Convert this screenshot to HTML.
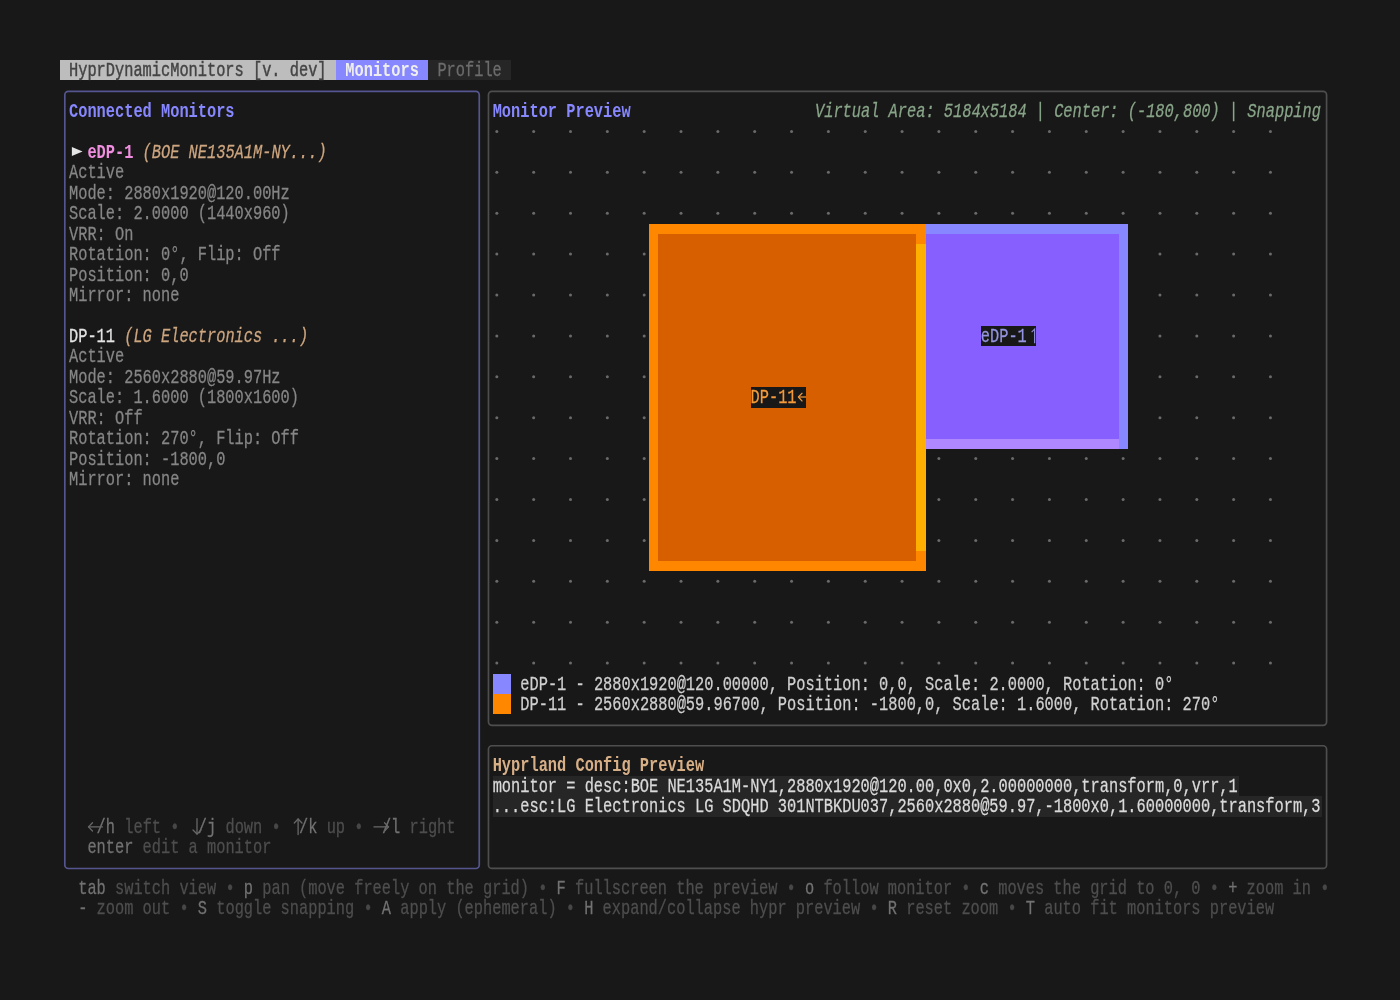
<!DOCTYPE html>
<html><head><meta charset="utf-8"><style>
html,body{margin:0;padding:0}
body{width:1400px;height:1000px;background:#181818;overflow:hidden;position:relative}
.b{position:absolute}
#tx{position:absolute;left:0;top:0;width:1400px;height:1000px;will-change:transform}
.bx{position:absolute;box-sizing:content-box}
.t{position:absolute;white-space:pre;font-family:"Liberation Mono",monospace;font-size:15.347px;line-height:20.45px;height:20.45px;transform:scaleY(1.27);transform-origin:0 7.3px;-webkit-text-stroke:0.2px currentColor}
.t span{-webkit-text-stroke:inherit}
</style></head><body>
<div id="tx"><div class="b" style="left:59.8px;top:60px;width:276.3px;height:20.45px;background:#bdbdbd;"></div>
<div class="b" style="left:336.1px;top:60px;width:92.1px;height:20.45px;background:#8787ff;"></div>
<div class="b" style="left:428.2px;top:60px;width:82.89px;height:20.45px;background:#262626;"></div>
<div class="t" style="left:69.01px;top:60px"><span style="color:#444444;-webkit-text-stroke:0.35px #444444">HyprDynamicMonitors [v. dev]</span></div>
<div class="t" style="left:345.31px;top:60px"><span style="color:#eeeeee;font-weight:bold;-webkit-text-stroke:0">Monitors</span></div>
<div class="t" style="left:437.41px;top:60px"><span style="color:#6c6c6c">Profile</span></div>
<div class="t" style="left:69.01px;top:100.9px"><span style="color:#8787ff;font-weight:bold;-webkit-text-stroke:0">Connected Monitors</span></div>
<div class="t" style="left:69.01px;top:141.8px">  <span style="color:#f08ee0;font-weight:bold;-webkit-text-stroke:0">eDP-1</span> <span style="color:#cda57f;font-style:italic">(BOE NE135A1M-NY...)</span></div>
<div class="t" style="left:69.01px;top:162.25px"><span style="color:#868686">Active</span></div>
<div class="t" style="left:69.01px;top:182.7px"><span style="color:#868686">Mode: 2880x1920@120.00Hz</span></div>
<div class="t" style="left:69.01px;top:203.15px"><span style="color:#868686">Scale: 2.0000 (1440x960)</span></div>
<div class="t" style="left:69.01px;top:223.6px"><span style="color:#868686">VRR: On</span></div>
<div class="t" style="left:69.01px;top:244.05px"><span style="color:#868686">Rotation: 0°, Flip: Off</span></div>
<div class="t" style="left:69.01px;top:264.5px"><span style="color:#868686">Position: 0,0</span></div>
<div class="t" style="left:69.01px;top:284.95px"><span style="color:#868686">Mirror: none</span></div>
<div class="t" style="left:69.01px;top:325.85px"><span style="color:#e4e4e4">DP-11</span> <span style="color:#cda57f;font-style:italic">(LG Electronics ...)</span></div>
<div class="t" style="left:69.01px;top:346.3px"><span style="color:#868686">Active</span></div>
<div class="t" style="left:69.01px;top:366.75px"><span style="color:#868686">Mode: 2560x2880@59.97Hz</span></div>
<div class="t" style="left:69.01px;top:387.2px"><span style="color:#868686">Scale: 1.6000 (1800x1600)</span></div>
<div class="t" style="left:69.01px;top:407.65px"><span style="color:#868686">VRR: Off</span></div>
<div class="t" style="left:69.01px;top:428.1px"><span style="color:#868686">Rotation: 270°, Flip: Off</span></div>
<div class="t" style="left:69.01px;top:448.55px"><span style="color:#868686">Position: -1800,0</span></div>
<div class="t" style="left:69.01px;top:469px"><span style="color:#868686">Mirror: none</span></div>
<div class="t" style="left:87.43px;top:816.65px"><span style="color:#727272"> /h</span><span style="color:#4e4e4e"> left</span><span style="color:#474747"> • </span><span style="color:#727272"> /j</span><span style="color:#4e4e4e"> down</span><span style="color:#474747"> • </span><span style="color:#727272"> /k</span><span style="color:#4e4e4e"> up</span><span style="color:#474747"> • </span><span style="color:#727272"> /l</span><span style="color:#4e4e4e"> right</span></div>
<div class="t" style="left:87.43px;top:837.1px"><span style="color:#727272">enter</span><span style="color:#4e4e4e"> edit a monitor</span></div>
<div class="t" style="left:492.67px;top:100.9px"><span style="color:#8787ff;font-weight:bold;-webkit-text-stroke:0">Monitor Preview</span></div>
<div class="t" style="left:815.02px;top:100.9px"><span style="color:#89a589;font-style:italic">Virtual Area: 5184x5184 | Center: (-180,800) | Snapping</span></div>
<div class="b" style="left:649.24px;top:223.6px;width:276.3px;height:347.65px;background:#ff8700;"></div>
<div class="b" style="left:658.45px;top:233.82px;width:257.88px;height:327.2px;background:#d75f00;"></div>
<div class="b" style="left:916.33px;top:244.05px;width:9.21px;height:306.75px;background:#ffaf00;"></div>
<div class="b" style="left:925.54px;top:223.6px;width:202.62px;height:224.95px;background:#8787ff;"></div>
<div class="b" style="left:925.54px;top:233.82px;width:193.41px;height:205.11px;background:#875fff;"></div>
<div class="b" style="left:925.54px;top:438.94px;width:193.41px;height:9.61px;background:#af87ff;"></div>
<div class="b" style="left:750.55px;top:387.2px;width:55.26px;height:20.45px;background:#181818;"></div>
<div class="t" style="left:750.55px;top:387.2px"><span style="color:#f59a3a">DP-11</span></div>
<div class="b" style="left:980.8px;top:325.85px;width:55.26px;height:20.45px;background:#181818;"></div>
<div class="t" style="left:980.8px;top:325.85px"><span style="color:#9494e0">eDP-1</span></div>
<div class="b" style="left:492.67px;top:673.5px;width:18.42px;height:20.45px;background:#8787ff;"></div>
<div class="b" style="left:492.67px;top:693.95px;width:18.42px;height:20.45px;background:#ff8700;"></div>
<div class="t" style="left:520.3px;top:673.5px"><span style="color:#d0d0d0">eDP-1 - 2880x1920@120.00000, Position: 0,0, Scale: 2.0000, Rotation: 0°</span></div>
<div class="t" style="left:520.3px;top:693.95px"><span style="color:#d0d0d0">DP-11 - 2560x2880@59.96700, Position: -1800,0, Scale: 1.6000, Rotation: 270°</span></div>
<div class="t" style="left:492.67px;top:755.3px"><span style="color:#d7af87;font-weight:bold;-webkit-text-stroke:0">Hyprland Config Preview</span></div>
<div class="b" style="left:492.67px;top:775.75px;width:746.01px;height:20.45px;background:#262626;"></div>
<div class="b" style="left:492.67px;top:796.2px;width:828.9px;height:20.45px;background:#262626;"></div>
<div class="t" style="left:492.67px;top:775.75px"><span style="color:#dadada">monitor = desc:BOE NE135A1M-NY1,2880x1920@120.00,0x0,2.00000000,transform,0,vrr,1</span></div>
<div class="t" style="left:492.67px;top:796.2px"><span style="color:#dadada">...esc:LG Electronics LG SDQHD 301NTBKDU037,2560x2880@59.97,-1800x0,1.60000000,transform,3</span></div>
<div class="t" style="left:78.22px;top:878px"><span style="color:#727272">tab</span><span style="color:#4e4e4e"> switch view</span><span style="color:#474747"> • </span><span style="color:#727272">p</span><span style="color:#4e4e4e"> pan (move freely on the grid)</span><span style="color:#474747"> • </span><span style="color:#727272">F</span><span style="color:#4e4e4e"> fullscreen the preview</span><span style="color:#474747"> • </span><span style="color:#727272">o</span><span style="color:#4e4e4e"> follow monitor</span><span style="color:#474747"> • </span><span style="color:#727272">c</span><span style="color:#4e4e4e"> moves the grid to 0, 0</span><span style="color:#474747"> • </span><span style="color:#727272">+</span><span style="color:#4e4e4e"> zoom in</span><span style="color:#474747"> •</span></div>
<div class="t" style="left:78.22px;top:898.45px"><span style="color:#727272">-</span><span style="color:#4e4e4e"> zoom out</span><span style="color:#474747"> • </span><span style="color:#727272">S</span><span style="color:#4e4e4e"> toggle snapping</span><span style="color:#474747"> • </span><span style="color:#727272">A</span><span style="color:#4e4e4e"> apply (ephemeral)</span><span style="color:#474747"> • </span><span style="color:#727272">H</span><span style="color:#4e4e4e"> expand/collapse hypr preview</span><span style="color:#474747"> • </span><span style="color:#727272">R</span><span style="color:#4e4e4e"> reset zoom</span><span style="color:#474747"> • </span><span style="color:#727272">T</span><span style="color:#4e4e4e"> auto fit monitors preview</span></div></div>
<svg width="1400" height="1000" style="position:absolute;left:0;top:0"><g fill="#6a6a6a"><circle cx="496.83" cy="131.42" r="1.5"/><circle cx="533.66" cy="131.42" r="1.5"/><circle cx="570.5" cy="131.42" r="1.5"/><circle cx="607.34" cy="131.42" r="1.5"/><circle cx="644.18" cy="131.42" r="1.5"/><circle cx="681.02" cy="131.42" r="1.5"/><circle cx="717.87" cy="131.42" r="1.5"/><circle cx="754.7" cy="131.42" r="1.5"/><circle cx="791.54" cy="131.42" r="1.5"/><circle cx="828.38" cy="131.42" r="1.5"/><circle cx="865.23" cy="131.42" r="1.5"/><circle cx="902.06" cy="131.42" r="1.5"/><circle cx="938.9" cy="131.42" r="1.5"/><circle cx="975.75" cy="131.42" r="1.5"/><circle cx="1012.59" cy="131.42" r="1.5"/><circle cx="1049.42" cy="131.42" r="1.5"/><circle cx="1086.27" cy="131.42" r="1.5"/><circle cx="1123.11" cy="131.42" r="1.5"/><circle cx="1159.94" cy="131.42" r="1.5"/><circle cx="1196.79" cy="131.42" r="1.5"/><circle cx="1233.62" cy="131.42" r="1.5"/><circle cx="1270.46" cy="131.42" r="1.5"/><circle cx="496.83" cy="172.32" r="1.5"/><circle cx="533.66" cy="172.32" r="1.5"/><circle cx="570.5" cy="172.32" r="1.5"/><circle cx="607.34" cy="172.32" r="1.5"/><circle cx="644.18" cy="172.32" r="1.5"/><circle cx="681.02" cy="172.32" r="1.5"/><circle cx="717.87" cy="172.32" r="1.5"/><circle cx="754.7" cy="172.32" r="1.5"/><circle cx="791.54" cy="172.32" r="1.5"/><circle cx="828.38" cy="172.32" r="1.5"/><circle cx="865.23" cy="172.32" r="1.5"/><circle cx="902.06" cy="172.32" r="1.5"/><circle cx="938.9" cy="172.32" r="1.5"/><circle cx="975.75" cy="172.32" r="1.5"/><circle cx="1012.59" cy="172.32" r="1.5"/><circle cx="1049.42" cy="172.32" r="1.5"/><circle cx="1086.27" cy="172.32" r="1.5"/><circle cx="1123.11" cy="172.32" r="1.5"/><circle cx="1159.94" cy="172.32" r="1.5"/><circle cx="1196.79" cy="172.32" r="1.5"/><circle cx="1233.62" cy="172.32" r="1.5"/><circle cx="1270.46" cy="172.32" r="1.5"/><circle cx="496.83" cy="213.22" r="1.5"/><circle cx="533.66" cy="213.22" r="1.5"/><circle cx="570.5" cy="213.22" r="1.5"/><circle cx="607.34" cy="213.22" r="1.5"/><circle cx="644.18" cy="213.22" r="1.5"/><circle cx="681.02" cy="213.22" r="1.5"/><circle cx="717.87" cy="213.22" r="1.5"/><circle cx="754.7" cy="213.22" r="1.5"/><circle cx="791.54" cy="213.22" r="1.5"/><circle cx="828.38" cy="213.22" r="1.5"/><circle cx="865.23" cy="213.22" r="1.5"/><circle cx="902.06" cy="213.22" r="1.5"/><circle cx="938.9" cy="213.22" r="1.5"/><circle cx="975.75" cy="213.22" r="1.5"/><circle cx="1012.59" cy="213.22" r="1.5"/><circle cx="1049.42" cy="213.22" r="1.5"/><circle cx="1086.27" cy="213.22" r="1.5"/><circle cx="1123.11" cy="213.22" r="1.5"/><circle cx="1159.94" cy="213.22" r="1.5"/><circle cx="1196.79" cy="213.22" r="1.5"/><circle cx="1233.62" cy="213.22" r="1.5"/><circle cx="1270.46" cy="213.22" r="1.5"/><circle cx="496.83" cy="254.12" r="1.5"/><circle cx="533.66" cy="254.12" r="1.5"/><circle cx="570.5" cy="254.12" r="1.5"/><circle cx="607.34" cy="254.12" r="1.5"/><circle cx="644.18" cy="254.12" r="1.5"/><circle cx="1159.94" cy="254.12" r="1.5"/><circle cx="1196.79" cy="254.12" r="1.5"/><circle cx="1233.62" cy="254.12" r="1.5"/><circle cx="1270.46" cy="254.12" r="1.5"/><circle cx="496.83" cy="295.02" r="1.5"/><circle cx="533.66" cy="295.02" r="1.5"/><circle cx="570.5" cy="295.02" r="1.5"/><circle cx="607.34" cy="295.02" r="1.5"/><circle cx="644.18" cy="295.02" r="1.5"/><circle cx="1159.94" cy="295.02" r="1.5"/><circle cx="1196.79" cy="295.02" r="1.5"/><circle cx="1233.62" cy="295.02" r="1.5"/><circle cx="1270.46" cy="295.02" r="1.5"/><circle cx="496.83" cy="335.93" r="1.5"/><circle cx="533.66" cy="335.93" r="1.5"/><circle cx="570.5" cy="335.93" r="1.5"/><circle cx="607.34" cy="335.93" r="1.5"/><circle cx="644.18" cy="335.93" r="1.5"/><circle cx="1159.94" cy="335.93" r="1.5"/><circle cx="1196.79" cy="335.93" r="1.5"/><circle cx="1233.62" cy="335.93" r="1.5"/><circle cx="1270.46" cy="335.93" r="1.5"/><circle cx="496.83" cy="376.82" r="1.5"/><circle cx="533.66" cy="376.82" r="1.5"/><circle cx="570.5" cy="376.82" r="1.5"/><circle cx="607.34" cy="376.82" r="1.5"/><circle cx="644.18" cy="376.82" r="1.5"/><circle cx="1159.94" cy="376.82" r="1.5"/><circle cx="1196.79" cy="376.82" r="1.5"/><circle cx="1233.62" cy="376.82" r="1.5"/><circle cx="1270.46" cy="376.82" r="1.5"/><circle cx="496.83" cy="417.73" r="1.5"/><circle cx="533.66" cy="417.73" r="1.5"/><circle cx="570.5" cy="417.73" r="1.5"/><circle cx="607.34" cy="417.73" r="1.5"/><circle cx="644.18" cy="417.73" r="1.5"/><circle cx="1159.94" cy="417.73" r="1.5"/><circle cx="1196.79" cy="417.73" r="1.5"/><circle cx="1233.62" cy="417.73" r="1.5"/><circle cx="1270.46" cy="417.73" r="1.5"/><circle cx="496.83" cy="458.62" r="1.5"/><circle cx="533.66" cy="458.62" r="1.5"/><circle cx="570.5" cy="458.62" r="1.5"/><circle cx="607.34" cy="458.62" r="1.5"/><circle cx="644.18" cy="458.62" r="1.5"/><circle cx="938.9" cy="458.62" r="1.5"/><circle cx="975.75" cy="458.62" r="1.5"/><circle cx="1012.59" cy="458.62" r="1.5"/><circle cx="1049.42" cy="458.62" r="1.5"/><circle cx="1086.27" cy="458.62" r="1.5"/><circle cx="1123.11" cy="458.62" r="1.5"/><circle cx="1159.94" cy="458.62" r="1.5"/><circle cx="1196.79" cy="458.62" r="1.5"/><circle cx="1233.62" cy="458.62" r="1.5"/><circle cx="1270.46" cy="458.62" r="1.5"/><circle cx="496.83" cy="499.53" r="1.5"/><circle cx="533.66" cy="499.53" r="1.5"/><circle cx="570.5" cy="499.53" r="1.5"/><circle cx="607.34" cy="499.53" r="1.5"/><circle cx="644.18" cy="499.53" r="1.5"/><circle cx="938.9" cy="499.53" r="1.5"/><circle cx="975.75" cy="499.53" r="1.5"/><circle cx="1012.59" cy="499.53" r="1.5"/><circle cx="1049.42" cy="499.53" r="1.5"/><circle cx="1086.27" cy="499.53" r="1.5"/><circle cx="1123.11" cy="499.53" r="1.5"/><circle cx="1159.94" cy="499.53" r="1.5"/><circle cx="1196.79" cy="499.53" r="1.5"/><circle cx="1233.62" cy="499.53" r="1.5"/><circle cx="1270.46" cy="499.53" r="1.5"/><circle cx="496.83" cy="540.43" r="1.5"/><circle cx="533.66" cy="540.43" r="1.5"/><circle cx="570.5" cy="540.43" r="1.5"/><circle cx="607.34" cy="540.43" r="1.5"/><circle cx="644.18" cy="540.43" r="1.5"/><circle cx="938.9" cy="540.43" r="1.5"/><circle cx="975.75" cy="540.43" r="1.5"/><circle cx="1012.59" cy="540.43" r="1.5"/><circle cx="1049.42" cy="540.43" r="1.5"/><circle cx="1086.27" cy="540.43" r="1.5"/><circle cx="1123.11" cy="540.43" r="1.5"/><circle cx="1159.94" cy="540.43" r="1.5"/><circle cx="1196.79" cy="540.43" r="1.5"/><circle cx="1233.62" cy="540.43" r="1.5"/><circle cx="1270.46" cy="540.43" r="1.5"/><circle cx="496.83" cy="581.33" r="1.5"/><circle cx="533.66" cy="581.33" r="1.5"/><circle cx="570.5" cy="581.33" r="1.5"/><circle cx="607.34" cy="581.33" r="1.5"/><circle cx="644.18" cy="581.33" r="1.5"/><circle cx="681.02" cy="581.33" r="1.5"/><circle cx="717.87" cy="581.33" r="1.5"/><circle cx="754.7" cy="581.33" r="1.5"/><circle cx="791.54" cy="581.33" r="1.5"/><circle cx="828.38" cy="581.33" r="1.5"/><circle cx="865.23" cy="581.33" r="1.5"/><circle cx="902.06" cy="581.33" r="1.5"/><circle cx="938.9" cy="581.33" r="1.5"/><circle cx="975.75" cy="581.33" r="1.5"/><circle cx="1012.59" cy="581.33" r="1.5"/><circle cx="1049.42" cy="581.33" r="1.5"/><circle cx="1086.27" cy="581.33" r="1.5"/><circle cx="1123.11" cy="581.33" r="1.5"/><circle cx="1159.94" cy="581.33" r="1.5"/><circle cx="1196.79" cy="581.33" r="1.5"/><circle cx="1233.62" cy="581.33" r="1.5"/><circle cx="1270.46" cy="581.33" r="1.5"/><circle cx="496.83" cy="622.23" r="1.5"/><circle cx="533.66" cy="622.23" r="1.5"/><circle cx="570.5" cy="622.23" r="1.5"/><circle cx="607.34" cy="622.23" r="1.5"/><circle cx="644.18" cy="622.23" r="1.5"/><circle cx="681.02" cy="622.23" r="1.5"/><circle cx="717.87" cy="622.23" r="1.5"/><circle cx="754.7" cy="622.23" r="1.5"/><circle cx="791.54" cy="622.23" r="1.5"/><circle cx="828.38" cy="622.23" r="1.5"/><circle cx="865.23" cy="622.23" r="1.5"/><circle cx="902.06" cy="622.23" r="1.5"/><circle cx="938.9" cy="622.23" r="1.5"/><circle cx="975.75" cy="622.23" r="1.5"/><circle cx="1012.59" cy="622.23" r="1.5"/><circle cx="1049.42" cy="622.23" r="1.5"/><circle cx="1086.27" cy="622.23" r="1.5"/><circle cx="1123.11" cy="622.23" r="1.5"/><circle cx="1159.94" cy="622.23" r="1.5"/><circle cx="1196.79" cy="622.23" r="1.5"/><circle cx="1233.62" cy="622.23" r="1.5"/><circle cx="1270.46" cy="622.23" r="1.5"/><circle cx="496.83" cy="663.12" r="1.5"/><circle cx="533.66" cy="663.12" r="1.5"/><circle cx="570.5" cy="663.12" r="1.5"/><circle cx="607.34" cy="663.12" r="1.5"/><circle cx="644.18" cy="663.12" r="1.5"/><circle cx="681.02" cy="663.12" r="1.5"/><circle cx="717.87" cy="663.12" r="1.5"/><circle cx="754.7" cy="663.12" r="1.5"/><circle cx="791.54" cy="663.12" r="1.5"/><circle cx="828.38" cy="663.12" r="1.5"/><circle cx="865.23" cy="663.12" r="1.5"/><circle cx="902.06" cy="663.12" r="1.5"/><circle cx="938.9" cy="663.12" r="1.5"/><circle cx="975.75" cy="663.12" r="1.5"/><circle cx="1012.59" cy="663.12" r="1.5"/><circle cx="1049.42" cy="663.12" r="1.5"/><circle cx="1086.27" cy="663.12" r="1.5"/><circle cx="1123.11" cy="663.12" r="1.5"/><circle cx="1159.94" cy="663.12" r="1.5"/><circle cx="1196.79" cy="663.12" r="1.5"/><circle cx="1233.62" cy="663.12" r="1.5"/><circle cx="1270.46" cy="663.12" r="1.5"/></g><rect x="64.81" y="91.38" width="414.45" height="777.1" rx="3.5" fill="none" stroke="#55558f" stroke-width="1.7"/><polygon points="71.9,147 82.6,151.5 71.9,156" fill="#e4e4e4"/><polyline points="88.5,826.9 102.5,826.9" fill="none" stroke="#686868" stroke-width="1.3" stroke-linecap="round" stroke-linejoin="round"/><polyline points="92.5,822.8 88.5,826.9 92.5,831" fill="none" stroke="#686868" stroke-width="1.3" stroke-linecap="round" stroke-linejoin="round"/><polyline points="197,818.7 197,834" fill="none" stroke="#686868" stroke-width="1.3" stroke-linecap="round" stroke-linejoin="round"/><polyline points="193,830 197,834 201,830" fill="none" stroke="#686868" stroke-width="1.3" stroke-linecap="round" stroke-linejoin="round"/><polyline points="298.1,819 298.1,834.6" fill="none" stroke="#686868" stroke-width="1.3" stroke-linecap="round" stroke-linejoin="round"/><polyline points="294.3,823 298.1,819 302,823" fill="none" stroke="#686868" stroke-width="1.3" stroke-linecap="round" stroke-linejoin="round"/><polyline points="374,826.9 388.5,826.9" fill="none" stroke="#686868" stroke-width="1.3" stroke-linecap="round" stroke-linejoin="round"/><polyline points="384.5,822.8 388.5,826.9 384.5,831" fill="none" stroke="#686868" stroke-width="1.3" stroke-linecap="round" stroke-linejoin="round"/><rect x="488.47" y="91.38" width="838.11" height="633.95" rx="3.5" fill="none" stroke="#4e4e4e" stroke-width="1.7"/><polyline points="798.6,397 806,397" fill="none" stroke="#f59a3a" stroke-width="1.2"/><polyline points="802.4,392.8 798.4,397 802.4,401.3" fill="none" stroke="#f59a3a" stroke-width="1.2" stroke-linejoin="round"/><polyline points="1031.6,332.2 1034.6,329.2 1034.6,343.2" fill="none" stroke="#8a8ad0" stroke-width="1.2"/><rect x="488.47" y="745.77" width="838.11" height="122.7" rx="3.5" fill="none" stroke="#4e4e4e" stroke-width="1.7"/></svg>
</body></html>
